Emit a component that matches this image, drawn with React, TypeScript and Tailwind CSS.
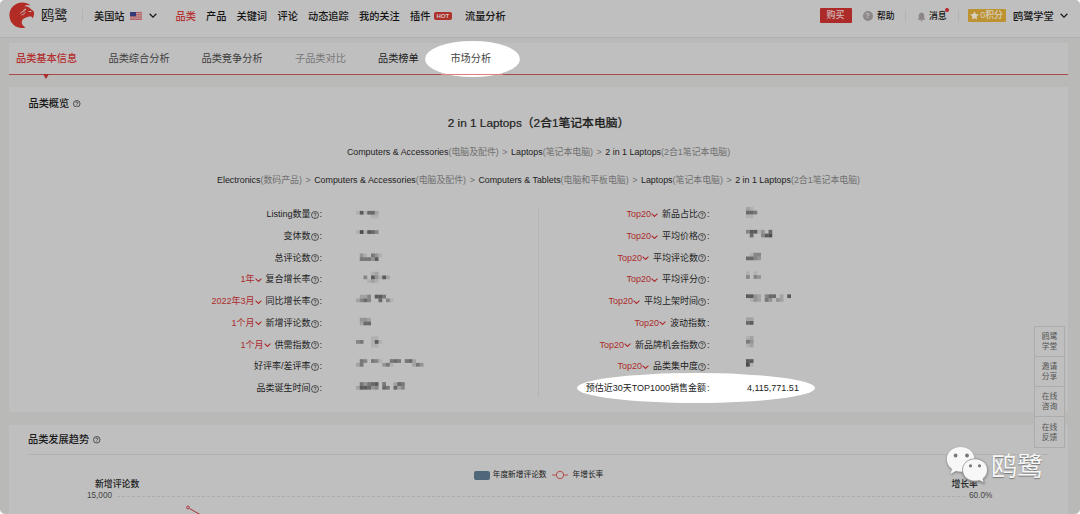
import React from "react";

const CELL = 3.75;

type MosaicBand = { top: number; rows: string[] };
type Row = {
  filter?: string;
  label: string;
  help?: boolean;
  mosaic?: MosaicBand;
  value?: string;
};

const leftRows: Row[] = [
  { label: "Listing数量", help: true, mosaic: { top: 211, rows: ["1716620", "0000110"] } },
  { label: "变体数", help: true, mosaic: { top: 230, rows: ["1817640"] } },
  { label: "总评论数", help: true, mosaic: { top: 253, rows: ["0310531", "0555370"] } },
  { filter: "1年", label: "复合增长率", help: true, mosaic: { top: 272, rows: ["000012", "004073172", "000121"] } },
  { filter: "2022年3月", label: "同比增长率", help: true, mosaic: { top: 294.7, rows: ["02240775", "2464006041"] } },
  { filter: "1个月", label: "新增评论数", help: true, mosaic: { top: 317.5, rows: ["0332", "0266"] } },
  { filter: "1个月", label: "供需指数", help: true, mosaic: { top: 336.7, rows: ["000011", "4500171", "000011"] } },
  { label: "好评率/差评率", help: true, mosaic: { top: 359.3, rows: ["054054100565056200", "250000035100000253"] } },
  { label: "品类诞生时间", help: true, mosaic: { top: 382, rows: ["0535670500265", "2776340650624"] } },
];

const rightRows: Row[] = [
  { filter: "Top20", label: "新品占比", help: true, mosaic: { top: 207, rows: ["21", "665", "11"] } },
  { filter: "Top20", label: "平均价格", help: true, mosaic: { top: 229.7, rows: ["4771306", "0600478"] } },
  { filter: "Top20", label: "平均评论数", help: true, mosaic: { top: 252.3, rows: ["0144", "6643"] } },
  { filter: "Top20", label: "平均评分", help: true, mosaic: { top: 271.6, rows: ["1010", "4043"] } },
  { filter: "Top20", label: "平均上架时间", help: true, mosaic: { top: 294.3, rows: ["773204660207", "013205303200"] } },
  { filter: "Top20", label: "波动指数", mosaic: { top: 317, rows: ["22", "67"] } },
  { filter: "Top20", label: "新品牌机会指数", help: true, mosaic: { top: 336.5, rows: ["12", "53", "12"] } },
  { filter: "Top20", label: "品类集中度", help: true, mosaic: { top: 359.3, rows: ["77", "81"] } },
  { label: "预估近30天TOP1000销售金额", value: "4,115,771.51" },
];

const ROW_TOP = 204.1;
const ROW_STEP = 21.72;

function Mosaic({ band, index }: { band: MosaicBand; index: number }) {
  const offset = band.top - (ROW_TOP + index * ROW_STEP);
  return (
    <svg className="h-full w-[70px] overflow-visible" aria-hidden="true">
      {band.rows.map((line, r) =>
        line.split("").map((d, c) =>
          d === "0" ? null : (
            <rect key={r + "-" + c} x={c * CELL} y={offset + r * CELL} width={CELL} height={CELL} fill="#000" opacity={Number(d) * 0.075} />
          ),
        ),
      )}
    </svg>
  );
}

function Help({ className = "size-[8px]" }: { className?: string }) {
  return (
    <svg viewBox="0 0 16 16" className={className + " shrink-0"} fill="none" stroke="currentColor" strokeWidth="1.4">
      <circle cx="8" cy="8" r="7" />
      <path d="M5.8 6.4a2.2 2.2 0 1 1 3.2 2c-.7.4-1 .8-1 1.5M8 11.2v1.4" />
    </svg>
  );
}

function Chevron({ className }: { className: string }) {
  return (
    <svg viewBox="0 0 10 6" className={className + " shrink-0"} fill="none" stroke="currentColor" strokeWidth="1.5">
      <path d="M.8.8 5 5 9.2.8" />
    </svg>
  );
}

function Rows({ rows, labelWidth, gap }: { rows: Row[]; labelWidth: string; gap: string }) {
  return (
    <div className="flex flex-col">
      {rows.map((row, i) => (
        <div key={i} className="flex h-[21.72px] items-center">
          <div className={"flex items-center justify-end whitespace-nowrap " + labelWidth}>
            {row.filter && (
              <span className="mr-[3.5px] flex items-center text-[#ab2b2b]">
                {row.filter}
                <Chevron className="ml-[0.500px] h-[4.200px] w-[7px]" />
              </span>
            )}
            <span>{row.label}</span>
            {row.help && <Help />}
            <span className="w-[4.500px] pl-[1px]">:</span>
          </div>
          <div className={"flex h-full items-center " + gap}>
            {row.mosaic ? <Mosaic band={row.mosaic} index={i} /> : <span className="pl-[1px] text-[9px]">{row.value}</span>}
          </div>
        </div>
      ))}
    </div>
  );
}

function Crumbs({ items }: { items: [string, string][] }) {
  return (
    <div className="flex h-[28px] items-center justify-center whitespace-nowrap text-[8.900px] text-[#707070]">
      {items.map(([en, zh], i) => (
        <React.Fragment key={i}>
          {i > 0 && <span className="w-[12.300px] text-center">&gt;</span>}
          <span className="text-[#222]">{en}</span>
          <span>({zh})</span>
        </React.Fragment>
      ))}
    </div>
  );
}

function Logo() {
  return (
    <svg viewBox="0 0 27 27" className="h-[27px] w-[27px] shrink-0">
      <path
        d="M13.200.4C6 .4.4 6 .4 13.200.4 20.400 6 26 13 26c1.300 0 2.500-.2 3.500-.6C12.500 23.500 11.500 19.500 14.500 16.800c1.800-1.600 4.500-1.900 6-2.400 1.400-.4 2.400.3 3.100 2.100 1.300-2.200 2.200-5.500.9-7.300-.9-1.200-2-1.300-2.700-2.100C20.500 5.200 18 3.800 15.200 4.200c2-1.500 4.500-1.500 6.600-.6C19.500 1.400 16.500.4 13.200.4Z"
        fill="#b32b25"
      />
      <path d="M11 11.500c2.500-1.200 3-3.800 6-4.500-1.300 1-1.500 2.300-3 3.600M12.500 13c2-.5 3-1.500 4-2.500M19.500 9.500h3" fill="none" stroke="#bfbfbf" strokeWidth=".9" />
    </svg>
  );
}

function WeChat() {
  return (
    <svg viewBox="0 0 42 40" className="h-[40px] w-[42px] shrink-0 drop-shadow-[0_1px_1px_#777]">
      <path d="M14.500 1C6.700 1 .8 6.300.8 13.300c0 4 1.900 7.400 5.200 9.700L4.500 28l5.400-2.900c1.500.4 3 .6 4.600.6 8 0 14-5.400 14-12.400S22.500 1 14.500 1Z" fill="#f7f7f7" />
      <path d="M29 12.800c-7.200 0-12.500 4.900-12.500 11.100S21.800 35.100 29 35.100c1.600 0 3.100-.3 4.400-.7l4.800 2.600-1.300-4.300c2.900-2.100 4.600-5.200 4.600-8.800 0-6.200-5.500-11.100-12.500-11.100Z" fill="#f7f7f7" stroke="#999" strokeWidth=".9" />
      <g fill="#777">
        <circle cx="9.600" cy="9.500" r="1.900" />
        <circle cx="21" cy="9.500" r="1.900" />
        <circle cx="24.500" cy="19.800" r="1.600" />
        <circle cx="33.500" cy="19.800" r="1.600" />
      </g>
    </svg>
  );
}

function Header() {
  return (
    <header className="flex h-[37.500px] shrink-0 items-center border-b border-[#b0b0b0] bg-[#bfbfbf] pb-[5px] pl-[9px] text-[10.200px] font-medium whitespace-nowrap text-[#151515]">
      <Logo />
      <span className="mt-[1px] ml-[5px] w-[41px] text-[13.200px] font-normal">鸥鹭</span>
      <span className="h-[13px] w-[12px] border-l border-[#b3b3b3]" />
      <span className="mt-[1px] w-[36px]">美国站</span>
      <svg viewBox="0 0 12 8" className="h-[8px] w-[12px]">
        <path fill="#bba9aa" d="M0 0h12v8H0z" />
        <path stroke="#b85456" strokeWidth=".9" d="M0 .5h12M0 2.300h12M0 4.100h12M0 5.900h12M0 7.600h12" />
        <path fill="#343b78" d="M0 0h6v4.300H0z" />
      </svg>
      <Chevron className="ml-[7px] h-[5px] w-[8px]" />
      <nav className="mt-[1px] ml-[18.500px] flex items-center">
        <span className="w-[30.500px] text-[#b83232]">品类</span>
        <span className="w-[30.500px]">产品</span>
        <span className="w-[41px]">关键词</span>
        <span className="w-[30.500px]">评论</span>
        <span className="w-[51px]">动态追踪</span>
        <span className="w-[51px]">我的关注</span>
        <span className="w-[23.500px]">插件</span>
        <span className="mr-[13px] flex h-[8.500px] w-[18.500px] items-center justify-center rounded-[2px] bg-[#ad302b] text-[6px] font-bold text-[#d4c4c4]">HOT</span>
        <span>流量分析</span>
      </nav>
      <div className="mr-[12px] ml-auto flex items-center">
        <span className="flex h-[15.500px] w-[32px] items-center justify-center rounded-[1px] bg-[#ac2b28] text-[9px] text-[#d0bcbc]">购买</span>
        <span className="mt-[1px] ml-[11px] flex size-[10px] items-center justify-center rounded-full bg-[#8d8888] text-[8px] font-bold text-[#bfbfbf]">?</span>
        <span className="mt-[1px] ml-[4.500px] w-[27.500px] text-[8.800px]">帮助</span>
        <span className="h-[10px] w-[12px] border-l border-[#b0b0b0]" />
        <svg viewBox="0 0 10 11" className="mt-[2px] h-[10px] w-[9px]" fill="#8b8585">
          <path d="M5 .5C3 .8 2 2.300 2 4.200v2.500L.8 8.600h8.400L8 6.700V4.200C8 2.300 7 .8 5 .5ZM3.800 9.200h2.400c0 1.500-2.400 1.500-2.400 0Z" />
        </svg>
        <span className="relative mt-[1px] ml-[3.500px] w-[28.500px] text-[8.800px]">
          消息
          <i className="absolute top-[-1.500px] left-[16px] size-[4px] rounded-full bg-[#b9252b]" />
        </span>
        <span className="h-[10px] w-[10px] border-l border-[#b0b0b0]" />
        <span className="flex h-[13px] w-[38px] items-center justify-center rounded-[1px] bg-[#bd9332] text-[8.800px] text-[#d8cfbd]">
          <svg viewBox="0 0 24 24" className="mr-[1px] size-[9px]" fill="currentColor">
            <path d="m12 1 3.500 7.200 7.900 1.100-5.700 5.600 1.400 7.900-7.100-3.700-7.100 3.700 1.400-7.900L.6 9.300l7.900-1.100L12 1Z" />
          </svg>
          0积分
        </span>
        <span className="mt-[1px] ml-[7.500px] w-[47px]">鸥鹭学堂</span>
        <Chevron className="h-[5px] w-[8px]" />
      </div>
    </header>
  );
}

export default function App() {
  return (
    <div className="h-[514px] w-[1080px] overflow-hidden bg-white font-['Liberation_Sans','Noto_Sans_CJK_SC',sans-serif]">
      <div className="relative flex h-full flex-col overflow-hidden rounded-[5px] bg-[#b9b9b7]">
        <Header />

        <div className="relative mt-[5.500px] mr-[12px] ml-[9px] flex h-[32px] shrink-0 items-center border-b border-[#a94a49] bg-[#bfbfbf] pt-[1px] pl-[7px] text-[10.200px] whitespace-nowrap text-[#3c3c3c]">
          <span className="w-[92.500px] font-medium text-[#b32f2f]">品类基本信息</span>
          <span className="w-[93px]">品类综合分析</span>
          <span className="w-[93.500px]">品类竞争分析</span>
          <span className="w-[83px] text-[#777]">子品类对比</span>
          <span className="w-[72px] text-[#222]">品类榜单</span>
          <span className="absolute top-[-2px] left-[416px] flex h-[36px] w-[94.500px] items-center justify-center rounded-[50%] bg-white pr-[3px] text-[#444]">市场分析</span>
          <span className="absolute bottom-[-1px] left-[432px] h-px w-[62px] bg-[#e87a7a]" />
          <svg viewBox="0 0 6 5" className="absolute top-[31px] left-[34px] h-[5px] w-[6px]">
            <path d="M0 0h6L3 5Z" fill="#ab2d2d" />
          </svg>
        </div>

        <section className="mt-[12px] mr-[12px] ml-[9px] h-[325px] shrink-0 bg-[#bfbfbf] text-[9px] text-[#222]">
          <h2 className="flex h-[26px] items-center gap-[4px] pt-[7px] pl-[19.500px] text-[10.200px] font-medium text-[#151515]">
            品类概览
            <Help className="size-[7.500px]" />
          </h2>
          <h1 className="flex h-[26px] items-center justify-center pb-[4px] text-[11.800px] font-medium text-[#222] [-webkit-text-stroke:0.200px]">2 in 1 Laptops（2合1笔记本电脑）</h1>
          <Crumbs
            items={[
              ["Computers & Accessories", "电脑及配件"],
              ["Laptops", "笔记本电脑"],
              ["2 in 1 Laptops", "2合1笔记本电脑"],
            ]}
          />
          <Crumbs
            items={[
              ["Electronics", "数码产品"],
              ["Computers & Accessories", "电脑及配件"],
              ["Computers & Tablets", "电脑和平板电脑"],
              ["Laptops", "笔记本电脑"],
              ["2 in 1 Laptops", "2合1笔记本电脑"],
            ]}
          />
          <div className="relative flex pt-[9.100px]">
            <div className="w-[529px]">
              <Rows rows={leftRows} labelWidth="w-[314px]" gap="pl-[33px]" />
            </div>
            <div className="mt-[4px] h-[189px] w-px bg-[#b5b5b5]" />
            <div className="absolute top-[178px] left-[567.500px] h-[30px] w-[238px] rounded-[50%] bg-white" />
            <div className="relative">
              <Rows rows={rightRows} labelWidth="w-[171.500px]" gap="pl-[35.500px]" />
            </div>
          </div>
        </section>

        <section className="mt-[12.500px] mr-[12px] ml-[9px] flex-1 overflow-hidden bg-[#bfbfbf] text-[#1a1a1a]">
          <h2 className="mx-[19px] flex h-[30px] items-center gap-[4px] border-b border-[#b2b2b2] pt-[2px] text-[10.200px] font-medium">
            品类发展趋势
            <Help className="size-[7.500px]" />
          </h2>
          <div className="mt-[14.500px] flex h-[12px] items-center justify-center text-[7.700px]">
            <span className="mr-[3px] h-[9px] w-[16px] rounded-[2px] bg-[#4e6879]" />
            <span>年度新增评论数</span>
            <svg viewBox="0 0 16 10" className="mx-[5px] h-[10px] w-[16px]" fill="#bfbfbf" stroke="#b54e50">
              <path d="M0 5h16" />
              <circle cx="8" cy="5" r="3.700" />
            </svg>
            <span>年增长率</span>
          </div>
          <div className="flex h-[8px] items-center justify-between pr-[90px] pl-[86px] text-[8.900px] font-medium">
            <span>新增评论数</span>
            <span>增长率</span>
          </div>
          <div className="mt-[1.500px] flex h-[12px] items-center text-[8.200px] text-[#444]">
            <span className="w-[103px] text-right">15,000</span>
            <span className="ml-[5px] w-[848px] border-t border-dashed border-[#adadad]" />
            <span className="ml-[4px]">60.0%</span>
          </div>
          <svg viewBox="0 0 20 12" className="ml-[176px] h-[12px] w-[20px]" fill="none" stroke="#a93137">
            <path d="m4.500 5.500 14 8" />
            <circle cx="3" cy="4.500" r="1.400" />
          </svg>
        </section>

        <aside className="absolute top-[326px] left-[1034px] w-[31px] divide-y divide-[#acacac] border border-[#acacac] bg-[#bfbfbf] text-center text-[7.800px] leading-[10px] text-[#555]">
          {["鸥鹭学堂", "邀请分享", "在线咨询", "在线反馈"].map((t) => (
            <div key={t} className="flex h-[30px] items-center justify-center pt-[1px]">
              <span className="w-[16px] break-all">{t}</span>
            </div>
          ))}
        </aside>

        <div className="absolute top-[446px] left-[946px] flex items-center text-[26px] leading-none font-normal text-[#f7f7f7]">
          <WeChat />
          <span className="mt-[1px] ml-[3px] [text-shadow:0_1px_1px_#777]">鸥鹭</span>
        </div>
      </div>
    </div>
  );
}
